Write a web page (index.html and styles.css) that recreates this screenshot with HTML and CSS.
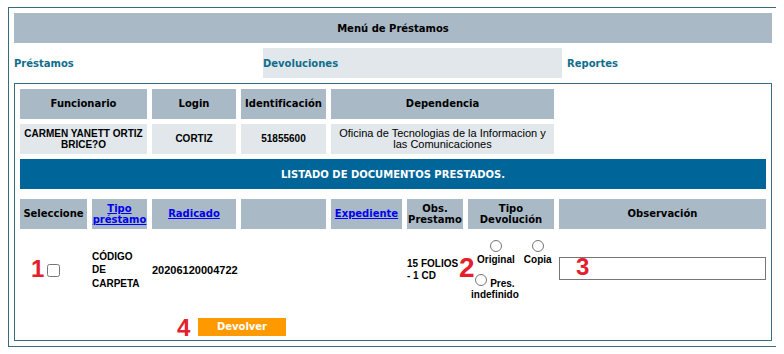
FILE: index.html
```html
<!DOCTYPE html>
<html lang="es">
<head>
<meta charset="UTF-8" />
<title>Menú de Préstamos</title>
<link rel="stylesheet" href="styles.css">
</head>
<body>

<div class="frame">
  <div class="menu-title">Menú de Préstamos</div>
  <div class="tabs">
    <a class="tab" href="#">Préstamos</a>
    <a class="tab active" href="#">Devoluciones</a>
    <a class="tab" href="#">Reportes</a>
  </div>

  <div class="panel">
    <div class="th span2">Funcionario</div>
    <div class="th">Login</div>
    <div class="th">Identificación</div>
    <div class="th span3">Dependencia</div>
    <div class="blank"></div>

    <div class="td span2">CARMEN YANETT ORTIZ BRICE?O</div>
    <div class="td">CORTIZ</div>
    <div class="td">51855600</div>
    <div class="td span3 plain">Oficina de Tecnologias de la Informacion y las Comunicaciones</div>
    <div class="blank"></div>

    <div class="listado">LISTADO DE DOCUMENTOS PRESTADOS.</div>

    <div class="th">Seleccione</div>
    <div class="th"><a href="#">Tipo<br>préstamo</a></div>
    <div class="th"><a href="#">Radicado</a></div>
    <div class="th"></div>
    <div class="th"><a href="#">Expediente</a></div>
    <div class="th">Obs.<br>Prestamo</div>
    <div class="th">Tipo<br>Devolución</div>
    <div class="th">Observación</div>

    <div class="cell center"><input type="checkbox" class="check"></div>
    <div class="cell text tall">CÓDIGO<br>DE<br>CARPETA</div>
    <div class="cell text radicado">20206120004722</div>
    <div class="cell"></div>
    <div class="cell"></div>
    <div class="cell text obs">15 FOLIOS - 1 CD</div>
    <div class="cell tipo">
      <div class="tipo-row">
        <label class="opt"><input type="radio" name="tipo">Original</label>
        <label class="opt"><input type="radio" name="tipo">Copia</label>
      </div>
      <label class="opt-wide">
        <span class="opt-line"><input type="radio" name="tipo"><span class="pres">Pres.</span></span>
        indefinido
      </label>
    </div>
    <div class="cell"><input type="text" class="obs-input"></div>

    <div class="actions"><button class="devolver">Devolver</button></div>

    <span class="mark mark-1">1</span>
    <span class="mark mark-2">2</span>
    <span class="mark mark-3">3</span>
    <span class="mark mark-4">4</span>
  </div>
</div>

</body>
</html>
```

FILE: styles.css
```css
body {
  margin: 7px 8px;
  background: #fff;
  font-family: "Liberation Sans", Arial, sans-serif;
  color: #000;
}
.frame {
  width: 770px;
  box-sizing: border-box;
  border: 1px solid #336f7b;
  padding: 5px;
  display: flex;
  flex-direction: column;
  gap: 5px;
}
.menu-title,
.th,
.tab,
.listado,
.devolver {
  font-family: "DejaVu Sans", Verdana, sans-serif;
  font-weight: bold;
  font-size: 10px;
}
.menu-title {
  height: 30px;
  background: #a9b9c6;
  display: flex;
  align-items: center;
  justify-content: center;
}
.tabs {
  display: grid;
  grid-template-columns: 244px 299px 1fr;
  gap: 5px;
  height: 30px;
}
.tab {
  display: flex;
  align-items: center;
  color: #0e6e8c;
  text-decoration: none;
}
.tab.active {
  background: #e1e7eb;
}

.panel {
  position: relative;
  border: 1px solid #336f7b;
  padding: 5px;
  display: grid;
  grid-template-columns: 67px 55px 84px 85px 71px 56px 86px 207px;
  grid-template-rows: 30px 30px 35px 30px 72px 24px;
  gap: 5px;
}
.span2 { grid-column: span 2; }
.span3 { grid-column: span 3; }
.th {
  background: #a9b9c6;
  display: flex;
  align-items: center;
  justify-content: center;
  text-align: center;
  line-height: 11.5px;
  white-space: nowrap;
}
.th a {
  color: #0000ee;
}
.td {
  background: #e1e7eb;
  display: flex;
  align-items: center;
  justify-content: center;
  text-align: center;
  font-size: 10px;
  font-weight: bold;
  line-height: 11.5px;
  padding: 0 2px;
}
.td.plain {
  font-size: 11px;
  font-weight: normal;
  padding: 0 6px;
}
.listado {
  grid-column: 1 / -1;
  height: 30px;
  background: #006699;
  color: #fff;
  display: flex;
  align-items: center;
  justify-content: center;
}

.cell {
  display: flex;
  align-items: center;
}
.cell.center {
  justify-content: center;
}
.text {
  font-size: 10px;
  font-weight: bold;
}
.tall {
  line-height: 13.5px;
}
.radicado {
  font-size: 11px;
}
.obs {
  line-height: 12px;
}
.check {
  margin: 0;
  width: 13px;
  height: 13px;
}
.cell.tipo {
  flex-direction: column;
  align-items: flex-start;
  padding-top: 6px;
  font-size: 10px;
  font-weight: bold;
  line-height: 11.5px;
}
.tipo input {
  margin: 0;
  width: 12px;
  height: 12px;
}
.tipo-row {
  display: flex;
  gap: 9px;
  padding-left: 9px;
}
.opt {
  display: flex;
  flex-direction: column;
  align-items: center;
  gap: 2px;
}
.opt-wide {
  display: flex;
  flex-direction: column;
  align-items: center;
  margin: 8px 0 0 3px;
}
.opt-line {
  display: flex;
  align-items: flex-start;
  gap: 3px;
}
.pres {
  margin-top: 4px;
}
.obs-input {
  align-self: flex-start;
  margin: 23px 0 0;
  width: 207px;
  height: 23px;
  box-sizing: border-box;
  border: 1px solid #767676;
  padding: 0;
}

.actions {
  grid-column: 1 / -1;
  padding: 5px 0 0 178px;
}
.devolver {
  width: 88px;
  height: 18px;
  border: none;
  padding: 0;
  background: #ff9900;
  color: #fff;
}

.mark {
  position: absolute;
  font-family: "Liberation Sans", Arial, sans-serif;
  font-weight: bold;
  font-size: 24px;
  line-height: 1;
  color: #e5202e;
}
.mark-1 { left: 16px; top: 173px; }
.mark-2 { left: 444px; top: 170px; font-size: 28px; }
.mark-3 { left: 561px; top: 171px; }
.mark-4 { left: 162px; top: 232px; }
```
